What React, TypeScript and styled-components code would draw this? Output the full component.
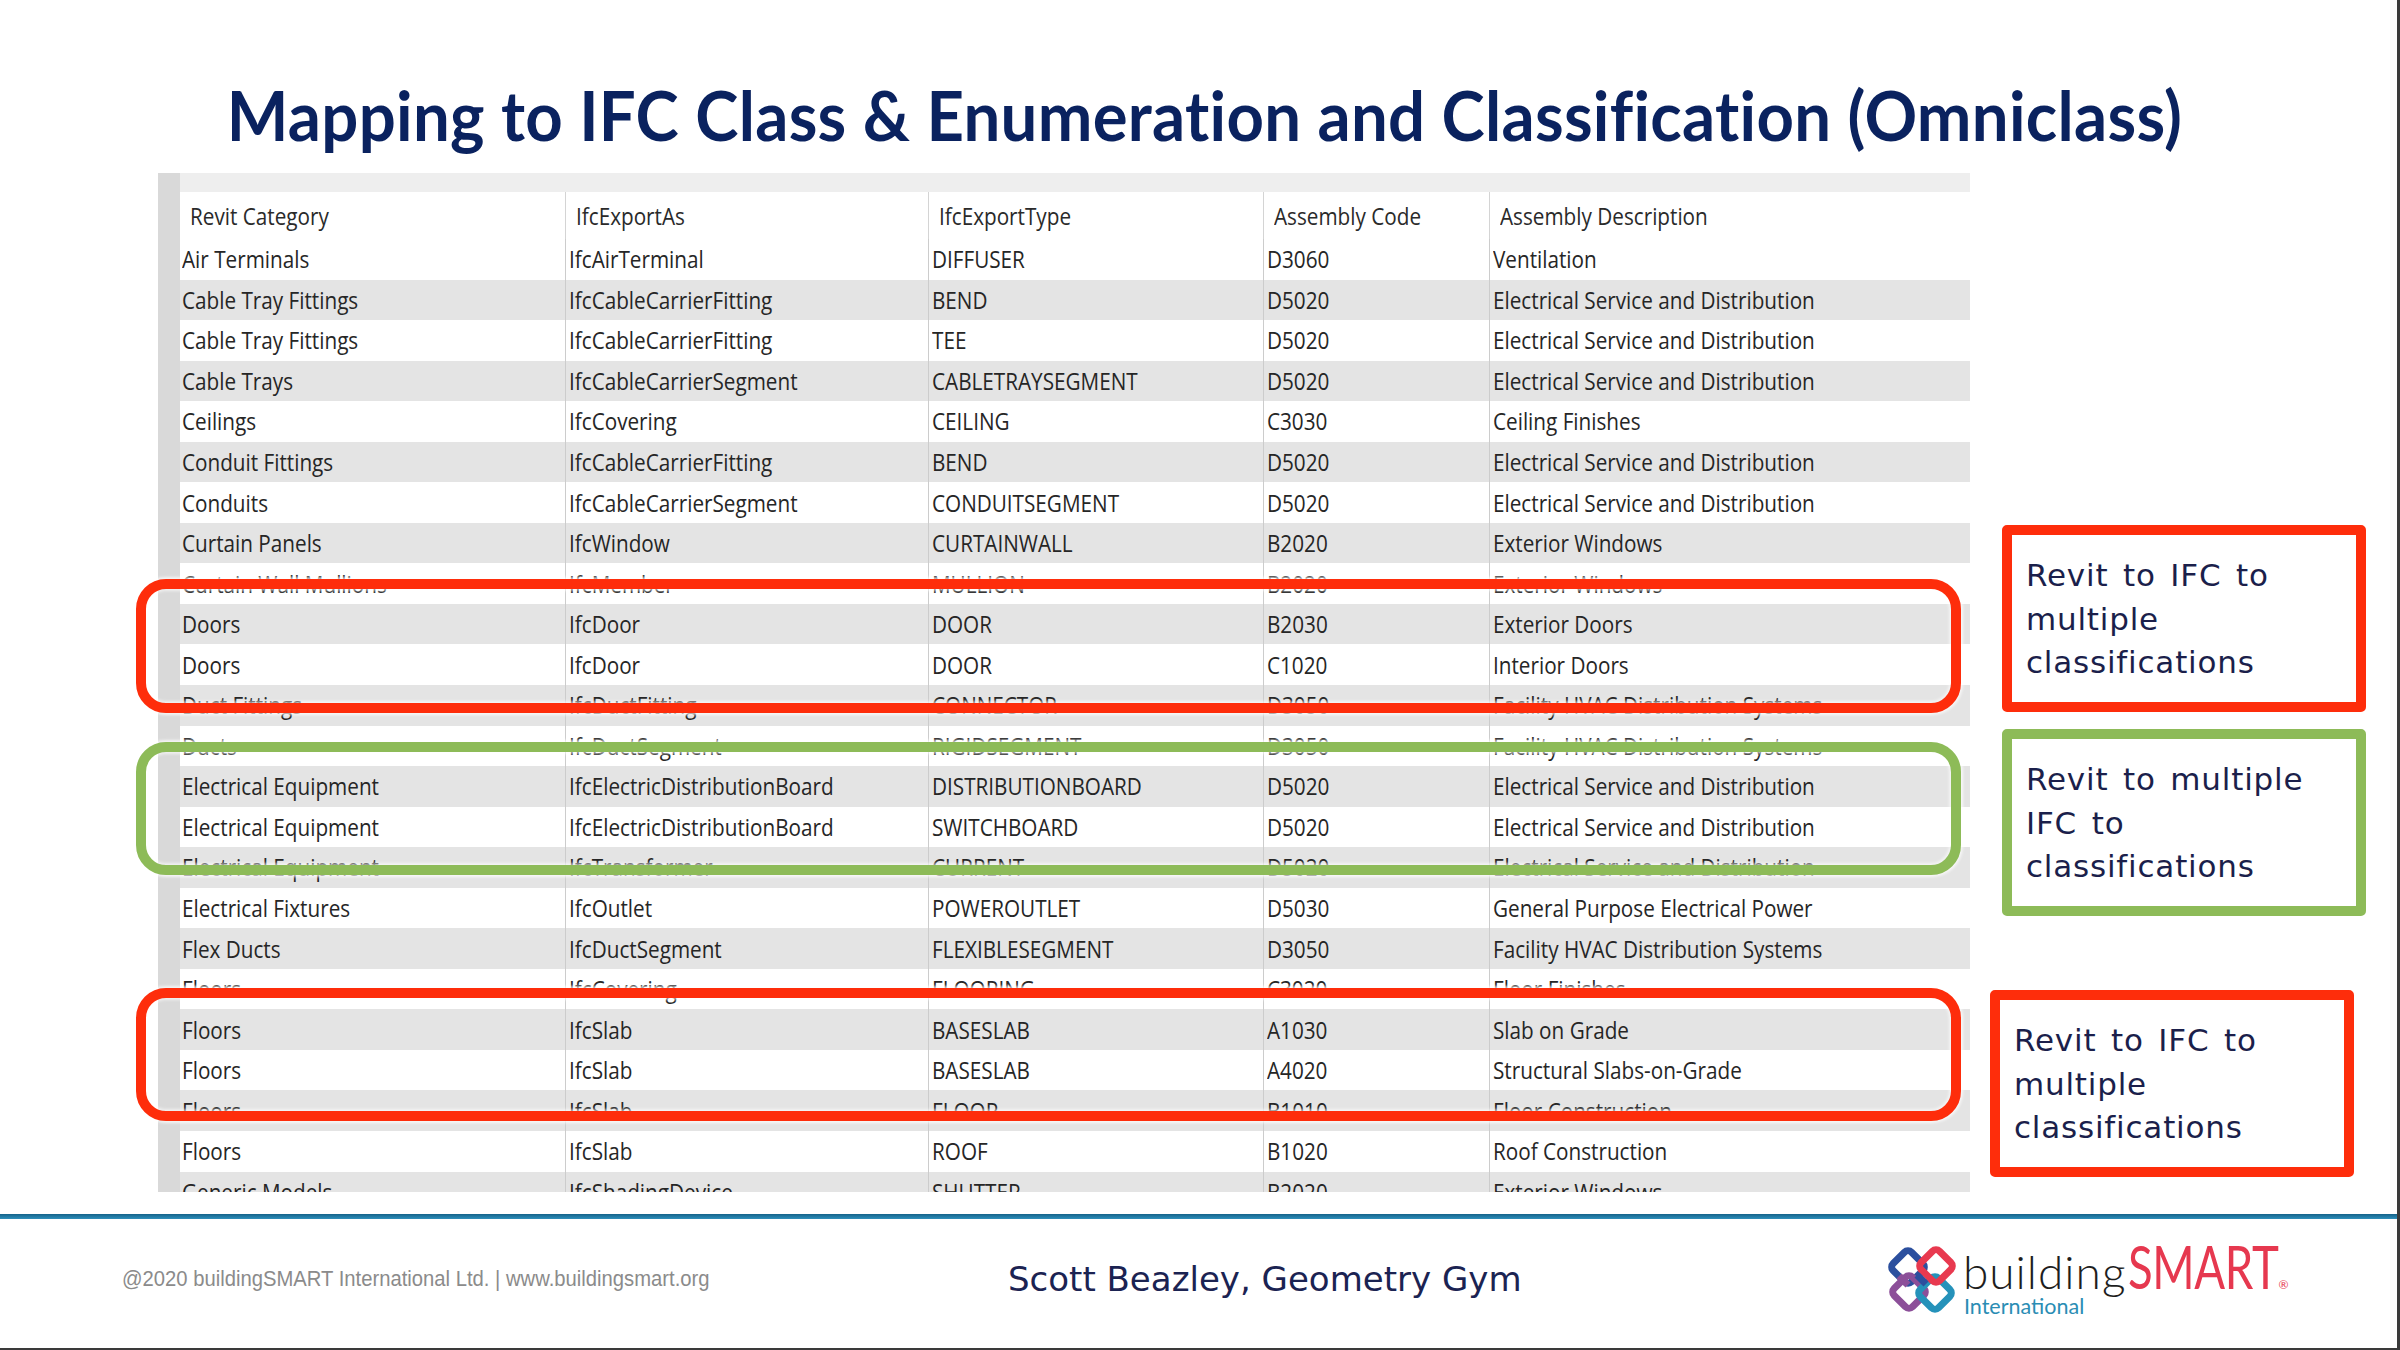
import React from "react";
import styled, { createGlobalStyle } from "styled-components";

const Global = createGlobalStyle`
  html, body { margin: 0; padding: 0; background: #ffffff; }
  body { width: 2400px; height: 1350px; overflow: hidden; }
`;

const Slide = styled.div`
  width: 2400px;
  height: 1350px;
  box-sizing: border-box;
  border-right: 3px solid #3a3a3a;
  border-bottom: 2px solid #3a3a3a;
  display: flex;
  flex-direction: column;
  background: #ffffff;
  overflow: hidden;
`;

const TitleBar = styled.header`
  height: 173px;
  flex-shrink: 0;
  box-sizing: border-box;
  padding-top: 81px;
  padding-left: 12px;
  text-align: center;
`;

const Title = styled.h1`
  margin: 0;
  display: inline-block;
  font: 700 68px/68px Lato, "Open Sans", sans-serif;
  color: #0a225f;
  white-space: nowrap;
  letter-spacing: 0.3px;
  transform: scaleX(0.96);
`;

const Main = styled.main`
  height: 1019px;
  flex-shrink: 0;
  display: flex;
  align-items: flex-start;
`;

const TableWrap = styled.section`
  position: relative;
  margin-left: 158px;
  width: 1812px;
  height: 1019px;
  flex-shrink: 0;
`;

const Frame = styled.div`
  width: 100%;
  height: 100%;
  overflow: hidden;
  display: grid;
  grid-template-columns: 22px 1fr;
  background: #eeeeee;
`;

const Strip = styled.div`
  background: #d9d9d9;
`;

const Grid = styled.div`
  display: flex;
  flex-direction: column;
  padding-top: 19px;
`;

const COLS = "385px 363px 335px 226px 481px";

const HeadRow = styled.div`
  display: grid;
  grid-template-columns: ${COLS};
  height: 47px;
  background: #ffffff;
  flex-shrink: 0;
`;

const HeadCell = styled.div<{ $first?: boolean }>`
  display: flex;
  align-items: center;
  padding-left: 10px;
  border-left: ${(p) => (p.$first ? "none" : "1px solid #d4d4d4")};
  font: 400 23px "Open Sans", "Noto Sans", sans-serif;
  color: #2a2a2a;
  white-space: nowrap;
`;

const Row = styled.div<{ $alt: boolean }>`
  display: grid;
  grid-template-columns: ${COLS};
  height: 40.55px;
  flex-shrink: 0;
  background: ${(p) => (p.$alt ? "#e4e4e4" : "#ffffff")};
`;

const Cell = styled.div<{ $first?: boolean }>`
  display: flex;
  align-items: center;
  padding-left: ${(p) => (p.$first ? "2px" : "3px")};
  border-left: ${(p) => (p.$first ? "none" : "1px solid #cccccc")};
  font: 400 23px "Open Sans", "Noto Sans", sans-serif;
  color: #262626;
  white-space: nowrap;
`;

const Squash = styled.span<{ $x: number }>`
  display: inline-block;
  transform: scaleX(${(p) => p.$x});
  transform-origin: left center;
`;

const Highlight = styled.div<{ $top: number; $h: number; $color: string }>`
  position: absolute;
  left: -22px;
  width: 1825px;
  top: ${(p) => p.$top}px;
  height: ${(p) => p.$h}px;
  box-sizing: border-box;
  border: 10px solid ${(p) => p.$color};
  border-radius: 30px;
  box-shadow: 0 0 3px 2px rgba(255, 255, 255, 0.75), inset 0 0 3px 2px rgba(255, 255, 255, 0.6);
  pointer-events: none;
`;

const Side = styled.aside`
  display: flex;
  flex-direction: column;
  margin-left: 20px;
`;

const NoteBox = styled.div<{ $color: string; $top: number; $shift: number }>`
  width: 364px;
  height: 187px;
  box-sizing: border-box;
  margin-top: ${(p) => p.$top}px;
  margin-left: ${(p) => p.$shift}px;
  border: 10px solid ${(p) => p.$color};
  border-radius: 5px;
  padding: 19px 0 0 14px;
  font: 400 31px/43.5px "DejaVu Sans", Verdana, sans-serif;
  letter-spacing: 0.8px;
  word-spacing: 4px;
  color: #1b1f4b;
  background: #ffffff;
  white-space: nowrap;
`;

const Rule = styled.div`
  margin-top: 22px;
  height: 5px;
  flex-shrink: 0;
  background: linear-gradient(#15638a, #2e8fbb);
`;

const Footer = styled.footer`
  flex: 1;
  display: grid;
  grid-template-columns: 886px 880px auto;
  align-items: center;
  padding-left: 122px;
  padding-bottom: 10px;
`;

const Copyright = styled.div`
  font: 400 22px "Liberation Sans", Arial, sans-serif;
  color: #8b8b8b;
  white-space: nowrap;
`;

const Credit = styled.div`
  font: 400 34px "DejaVu Sans", Verdana, sans-serif;
  color: #1b2352;
  white-space: nowrap;
`;

const Logo = styled.div`
  display: flex;
  align-items: flex-start;
  margin-left: -4px;
`;

const Wordmark = styled.div`
  display: flex;
  flex-direction: column;
  margin-left: 3px;
`;

const WordRow = styled.div`
  display: flex;
  align-items: baseline;
  height: 50px;
`;

const Building = styled.span`
  font: 300 46px/50px Lato, sans-serif;
  color: #1e1e1e;
  letter-spacing: 1px;
`;

const Smart = styled.span`
  display: inline-block;
  font: 400 60px/50px Lato, sans-serif;
  color: #e6384f;
  transform: scaleX(0.76);
  transform-origin: left center;
  margin-left: 2px;
  margin-right: -50px;
  letter-spacing: -0.5px;
`;

const Reg = styled.span`
  font: 400 12px Lato, sans-serif;
  color: #e6384f;
  margin-left: 2px;
`;

const Intl = styled.span`
  display: inline-block;
  font: 400 21.5px/22px Lato, sans-serif;
  color: #2a8db4;
  margin-top: 4px;
  margin-left: 1px;
`;

type R = [string, string, string, string, string];

const HEAD: R = ["Revit Category", "IfcExportAs", "IfcExportType", "Assembly Code", "Assembly Description"];

const ROWS: R[] = [
  ["Air Terminals", "IfcAirTerminal", "DIFFUSER", "D3060", "Ventilation"],
  ["Cable Tray Fittings", "IfcCableCarrierFitting", "BEND", "D5020", "Electrical Service and Distribution"],
  ["Cable Tray Fittings", "IfcCableCarrierFitting", "TEE", "D5020", "Electrical Service and Distribution"],
  ["Cable Trays", "IfcCableCarrierSegment", "CABLETRAYSEGMENT", "D5020", "Electrical Service and Distribution"],
  ["Ceilings", "IfcCovering", "CEILING", "C3030", "Ceiling Finishes"],
  ["Conduit Fittings", "IfcCableCarrierFitting", "BEND", "D5020", "Electrical Service and Distribution"],
  ["Conduits", "IfcCableCarrierSegment", "CONDUITSEGMENT", "D5020", "Electrical Service and Distribution"],
  ["Curtain Panels", "IfcWindow", "CURTAINWALL", "B2020", "Exterior Windows"],
  ["Curtain Wall Mullions", "IfcMember", "MULLION", "B2020", "Exterior Windows"],
  ["Doors", "IfcDoor", "DOOR", "B2030", "Exterior Doors"],
  ["Doors", "IfcDoor", "DOOR", "C1020", "Interior Doors"],
  ["Duct Fittings", "IfcDuctFitting", "CONNECTOR", "D3050", "Facility HVAC Distribution Systems"],
  ["Ducts", "IfcDuctSegment", "RIGIDSEGMENT", "D3050", "Facility HVAC Distribution Systems"],
  ["Electrical Equipment", "IfcElectricDistributionBoard", "DISTRIBUTIONBOARD", "D5020", "Electrical Service and Distribution"],
  ["Electrical Equipment", "IfcElectricDistributionBoard", "SWITCHBOARD", "D5020", "Electrical Service and Distribution"],
  ["Electrical Equipment", "IfcTransformer", "CURRENT", "D5020", "Electrical Service and Distribution"],
  ["Electrical Fixtures", "IfcOutlet", "POWEROUTLET", "D5030", "General Purpose Electrical Power"],
  ["Flex Ducts", "IfcDuctSegment", "FLEXIBLESEGMENT", "D3050", "Facility HVAC Distribution Systems"],
  ["Floors", "IfcCovering", "FLOORING", "C3020", "Floor Finishes"],
  ["Floors", "IfcSlab", "BASESLAB", "A1030", "Slab on Grade"],
  ["Floors", "IfcSlab", "BASESLAB", "A4020", "Structural Slabs-on-Grade"],
  ["Floors", "IfcSlab", "FLOOR", "B1010", "Floor Construction"],
  ["Floors", "IfcSlab", "ROOF", "B1020", "Roof Construction"],
  ["Generic Models", "IfcShadingDevice", "SHUTTER", "B2020", "Exterior Windows"],
];

const TX = 0.9;

const LogoMark = () => (
  <svg width="76" height="76" viewBox="0 0 74 76" aria-hidden="true">
    <g fill="none" strokeWidth="7">
      <rect x="-13" y="-13" width="26" height="26" rx="5" transform="translate(23 26) rotate(45)" stroke="#2b4f9e" />
      <rect x="-13" y="-13" width="26" height="26" rx="5" transform="translate(24 51) rotate(45)" stroke="#8c4f99" />
      <rect x="-13" y="-13" width="26" height="26" rx="5" transform="translate(50 52) rotate(45)" stroke="#2592ba" />
      <rect x="-13" y="-13" width="26" height="26" rx="5" transform="translate(51 25) rotate(45)" stroke="#e8394f" />
      <path d="M14 35 L23 44" stroke="#8c4f99" />
      <path d="M41 43 L32 34" stroke="#2b4f9e" />
    </g>
  </svg>
);

export default function App() {
  return (
    <>
      <Global />
      <Slide>
        <TitleBar>
          <Title>Mapping to IFC Class &amp; Enumeration and Classification (Omniclass)</Title>
        </TitleBar>
        <Main>
          <TableWrap>
            <Frame>
              <Strip />
              <Grid>
                <HeadRow>
                  {HEAD.map((h, i) => (
                    <HeadCell key={h} $first={i === 0}>
                      <Squash $x={TX}>{h}</Squash>
                    </HeadCell>
                  ))}
                </HeadRow>
                {ROWS.map((r, ri) => (
                  <Row key={ri} $alt={ri % 2 === 1}>
                    {r.map((c, ci) => (
                      <Cell key={ci} $first={ci === 0}>
                        <Squash $x={TX}>{c}</Squash>
                      </Cell>
                    ))}
                  </Row>
                ))}
              </Grid>
            </Frame>
            <Highlight $top={406} $h={134} $color="#fe2d0b" />
            <Highlight $top={569} $h={133} $color="#8dbb58" />
            <Highlight $top={815} $h={133} $color="#fe2d0b" />
          </TableWrap>
          <Side>
            <NoteBox $color="#fe2d0b" $top={352} $shift={12}>
              Revit to IFC to
              <br />
              multiple
              <br />
              classifications
            </NoteBox>
            <NoteBox $color="#8dbb58" $top={17} $shift={12}>
              Revit to multiple
              <br />
              IFC to
              <br />
              classifications
            </NoteBox>
            <NoteBox $color="#fe2d0b" $top={74} $shift={0}>
              Revit to IFC to
              <br />
              multiple
              <br />
              classifications
            </NoteBox>
          </Side>
        </Main>
        <Rule />
        <Footer>
          <Copyright>
            <Squash $x={0.92}>@2020 buildingSMART International Ltd. | www.buildingsmart.org</Squash>
          </Copyright>
          <Credit>Scott Beazley, Geometry Gym</Credit>
          <Logo>
            <LogoMark />
            <Wordmark>
              <WordRow>
                <Building>building</Building>
                <Smart>SMART</Smart>
                <Reg>®</Reg>
              </WordRow>
              <Intl>International</Intl>
            </Wordmark>
          </Logo>
        </Footer>
      </Slide>
    </>
  );
}
